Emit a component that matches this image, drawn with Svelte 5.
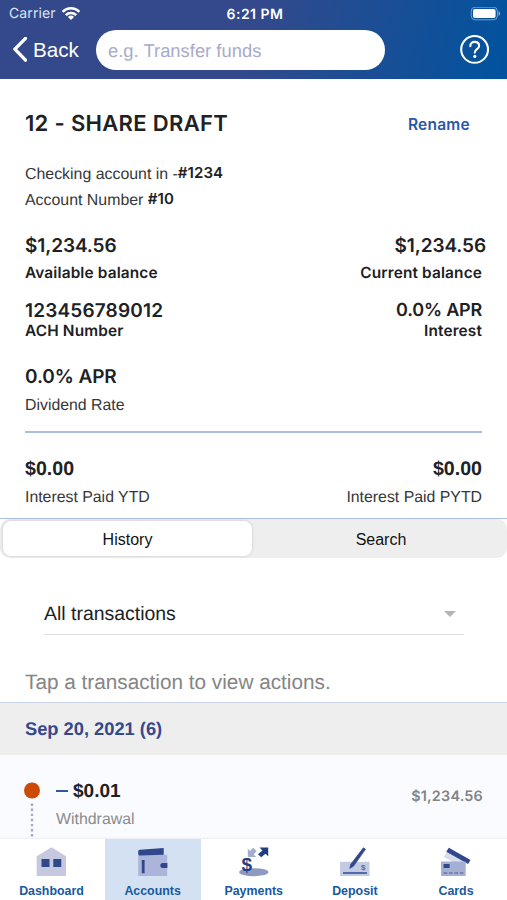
<script lang="ts">
  type Stat = { value: string; label: string };

  const available: Stat = { value: "$1,234.56", label: "Available balance" };
  const current: Stat = { value: "$1,234.56", label: "Current balance" };
  const ach: Stat = { value: "123456789012", label: "ACH Number" };
  const interest: Stat = { value: "0.0% APR", label: "Interest" };
  const dividend: Stat = { value: "0.0% APR", label: "Dividend Rate" };
  const ytd: Stat = { value: "$0.00", label: "Interest Paid YTD" };
  const pytd: Stat = { value: "$0.00", label: "Interest Paid PYTD" };

  const tabs = ["Dashboard", "Accounts", "Payments", "Deposit", "Cards"];

  let activeTab = $state("Accounts");
  let view = $state("History");
</script>

{#snippet stat(item: Stat, kind: string)}
  <div class="stat {kind}">
    <div class="value">{item.value}</div>
    <div class="label">{item.label}</div>
  </div>
{/snippet}

<div class="screen">
  <header>
    <div class="status">
      <div class="carrier">
        <span>Carrier</span>
        <svg width="20" height="14" viewBox="0 0 20 14" fill="none" stroke="#fff" stroke-width="2.5">
          <path d="M1.6 4.8a12 12 0 0 1 16.8 0" />
          <path d="M4.8 8.1a7.4 7.4 0 0 1 10.4 0" />
          <path d="M10 12.9 6.9 10a4.6 4.6 0 0 1 6.2 0z" fill="#fff" stroke="none" />
        </svg>
      </div>
      <div class="clock">6:21 PM</div>
      <div class="battery">
        <svg width="31" height="14" viewBox="0 0 31 14">
          <rect x="1.2" y="0.2" width="26.2" height="12.6" rx="4" fill="none" stroke="#fff" stroke-opacity=".45" />
          <rect x="3" y="2" width="22.6" height="9" rx="2" fill="#fff" />
          <path d="M28.6 4.1c2 .8 2 4 0 4.8z" fill="#fff" fill-opacity=".55" />
        </svg>
      </div>
    </div>
    <div class="toolbar">
      <button class="back" type="button">
        <svg width="15" height="26" viewBox="0 0 15 26" fill="none" stroke="#fff" stroke-width="3.4" stroke-linecap="round" stroke-linejoin="round">
          <path d="M13.5 1.4 2.9 12.1l10.6 11" />
        </svg>
        <span>Back</span>
      </button>
      <div class="search">e.g. Transfer funds</div>
      <button class="help" type="button" aria-label="Help">
        <svg width="30" height="30" viewBox="0 0 30 30" fill="none" stroke="#fff" stroke-width="2.1">
          <circle cx="14.6" cy="14.4" r="13.4" />
          <path d="M10.3 11.2c0-2.7 1.8-4.3 4.4-4.3s4.4 1.6 4.4 4c0 3.4-4.3 3.2-4.3 6.7" stroke-linecap="round" />
          <circle cx="14.8" cy="21.4" r="1.6" fill="#fff" stroke="none" />
        </svg>
      </button>
    </div>
  </header>

  <section class="details">
    <div class="title-row">
      <h1>12 - SHARE DRAFT</h1>
      <button class="rename" type="button">Rename</button>
    </div>
    <p><span>Checking account in -</span><b>#1234</b></p>
    <p><span>Account Number&nbsp;</span><b>#10</b></p>
    <div class="pair balances">
      {@render stat(available, "left")}
      {@render stat(current, "right wide")}
    </div>
    <div class="pair rates">
      {@render stat(ach, "left ach")}
      {@render stat(interest, "right small")}
    </div>
    <div class="pair dividend">
      {@render stat(dividend, "left plain")}
    </div>
    <div class="pair paid">
      {@render stat(ytd, "left plain money")}
      {@render stat(pytd, "right plain money")}
    </div>
  </section>

  <div class="segments">
    {#each ["History", "Search"] as name}
      <button type="button" class:selected={view === name} onclick={() => (view = name)}>{name}</button>
    {/each}
  </div>

  <div class="filter">
    <span>All transactions</span>
    <svg width="12" height="6" viewBox="0 0 12 6"><path d="M0 0h12L6 6z" fill="#b5b5b5" /></svg>
  </div>
  <div class="hint">Tap a transaction to view actions.</div>
  <div class="date">Sep 20, 2021 (6)</div>

  <div class="transaction">
    <svg class="timeline" width="16" height="57" viewBox="0 0 16 57">
      <circle cx="8" cy="8.5" r="8" fill="#cb4b05" />
      <path d="M8 21.5V57" stroke="#a3a8dc" stroke-width="2.4" stroke-dasharray="2.4 2.7" />
    </svg>
    <div class="entry">
      <div class="amount"><i></i><span>$0.01</span></div>
      <div class="kind">Withdrawal</div>
    </div>
    <div class="running">$1,234.56</div>
  </div>

  <nav>
    {#each tabs as tab}
      <button type="button" class:active={activeTab === tab} onclick={() => (activeTab = tab)}>
        <svg width="32" height="32" viewBox="0 0 32 32">
          {#if tab === "Dashboard"}
            <path d="M.7 10.2 15.5 1.2l14.5 9V30H.7z" fill="#c5c8df" />
            <path d="M5.5 13h8v8h-8zM17.3 13h8v8h-8z" fill="#31478c" />
          {:else if tab === "Accounts"}
            <path d="M1.2 8.8h29V30h-29z" fill="#aab5d9" />
            <path d="M1.2 5.2q0-1.4 1.6-1.5L26.7 2v6.8L2.9 9.4Q1.2 9.3 1.2 8z" fill="#31478c" />
            <path d="M4.8 14h2.8v13.3H4.8zM25.8 17h4.6v5h-4.6a2.5 2.5 0 0 1 0-5z" fill="#31478c" />
          {:else if tab === "Payments"}
            <ellipse cx="15.8" cy="26.2" rx="14.6" ry="4" fill="#8e9ac2" />
            <path d="M9.8 2.5V11h8.4l-2.6-2.6 3-3.3-3.6-3.3-2.8 3.2z" fill="#a5adce" />
            <path d="M30.2 1.5v8.8l-2.7-2.6-4.3 3.6L20 8.2l4.4-3.8-2.9-2.9z" fill="#213f80" />
            <text x="8.8" y="25.4" text-anchor="middle" class="dollar">$</text>
          {:else if tab === "Deposit"}
            <path d="M1 15.8h29.5V30H1z" fill="#c3cbe3" />
            <path d="M4 26h24v2H4z" fill="#536aaa" />
            <path d="m24.4 1.8 2 1.5-12 17-3.6 2 1-4z" fill="#31478c" stroke="#31478c" stroke-width=".8" />
            <text x="24.2" y="23.6" text-anchor="middle" class="check">$</text>
          {:else}
            <path d="m7.2 3.5 20 11.5-4 7L4 11z" fill="#d8dcec" />
            <path d="m8.8 1.8 21.7 12.3-2.4 4L6.4 5.8z" fill="#31478c" />
            <path d="M1 15.5h24.7V30H1z" fill="#a5afd2" />
            <path d="M3.6 18h6v4h-6z" fill="#31478c" />
            <path d="M3.6 27h20" stroke="#6678ae" stroke-width="1.7" stroke-dasharray="3.6 1.8" />
          {/if}
        </svg>
        <span>{tab}</span>
      </button>
    {/each}
  </nav>
</div>

<style>
  :global(body) {
    background: #fff;
  }

  .screen {
    width: 507px;
    height: 900px;
    overflow: hidden;
    display: flex;
    flex-direction: column;
    font-family: "Liberation Sans", Arial, sans-serif;
    color: #202124;
    text-rendering: geometricPrecision;
  }

  .screen * {
    box-sizing: border-box;
  }

  button {
    border: 0;
    padding: 0;
    background: none;
    font: inherit;
    letter-spacing: inherit;
    color: inherit;
  }

  svg {
    display: block;
    flex: none;
  }

  header {
    height: 79px;
    flex: none;
    color: #fff;
    background: linear-gradient(105deg, #34498b 0%, #34498b 48%, #00539f 100%);
  }

  .status {
    height: 27px;
    padding: 0 6px 0 9px;
    display: grid;
    grid-template-columns: 1fr auto 1fr;
    align-items: center;
    font-size: 14px;
    font-family: Inter, sans-serif;
  }

  .carrier {
    display: flex;
    align-items: center;
    gap: 5px;
    color: #dfe4f4;
    letter-spacing: 0.1px;
  }

  .clock {
    padding-top: 1px;
    font-weight: 600;
    letter-spacing: 0.5px;
  }

  .battery {
    justify-self: end;
  }

  .toolbar {
    height: 46px;
    padding: 0 17px 0 12px;
    display: flex;
    align-items: center;
  }

  .back {
    width: 84px;
    display: flex;
    align-items: center;
    gap: 6px;
    font-size: 20.6px;
  }

  .search {
    width: 289px;
    height: 40px;
    padding-left: 12px;
    border-radius: 20px;
    background: #fff;
    color: #a9abc9;
    font-size: 18.4px;
    line-height: 41px;
  }

  .help {
    margin-left: auto;
  }

  .details {
    height: 440px;
    flex: none;
    padding: 25px 25px 0;
    border-bottom: 1px solid #a9bfdd;
  }

  .title-row {
    height: 40px;
    margin-bottom: 17px;
    display: flex;
    justify-content: space-between;
    align-items: center;
  }

  h1 {
    margin: 0;
    font: 600 22px/38px Inter, sans-serif;
    letter-spacing: 0.32px;
  }

  .rename {
    margin-right: 12px;
    padding-top: 1px;
    font: 600 15.5px Inter, sans-serif;
    letter-spacing: 0.25px;
    color: #2c56a7;
  }

  p {
    margin: 0;
    height: 26px;
    line-height: 28px;
    font-size: 15.9px;
    color: #36373a;
    display: flex;
  }

  p b {
    font: 600 15px/24px Inter, sans-serif;
    letter-spacing: 0.1px;
    color: #202124;
  }

  .pair {
    display: flex;
    justify-content: space-between;
  }

  .balances {
    height: 65px;
    padding-top: 20px;
  }

  .rates {
    height: 66px;
    padding-top: 20px;
  }

  .dividend {
    height: 89px;
    padding-top: 20px;
    border-bottom: 2px solid #a9c0dc;
  }

  .paid {
    padding-top: 23px;
  }

  .right {
    text-align: right;
  }

  .value {
    height: 26px;
    font: 600 19px/25px Inter, sans-serif;
    letter-spacing: -0.1px;
  }

  .label {
    height: 27px;
    font: 600 15.4px/27px Inter, sans-serif;
    letter-spacing: 0.14px;
  }

  .wide .value {
    margin-right: -4px;
  }

  .ach .value {
    letter-spacing: 0.17px;
  }

  .small .value {
    font-size: 18px;
    letter-spacing: -0.2px;
  }

  .rates .label {
    line-height: 14px;
  }

  .plain .label {
    font: 15.85px/31px "Liberation Sans", Arial, sans-serif;
    letter-spacing: 0;
    color: #36373a;
  }

  .money .value {
    font: bold 19.6px/26px "Liberation Sans", Arial, sans-serif;
    letter-spacing: 0;
  }

  .segments {
    height: 39px;
    flex: none;
    padding: 2px 1px 2px 3px;
    display: grid;
    grid-template-columns: 249px 1fr;
    gap: 4px;
    border-radius: 10px;
    background: #eee;
    font-size: 16px;
    color: #111;
  }

  .segments button {
    border-radius: 8px;
    padding-top: 3px;
  }

  .segments .selected {
    background: #fff;
    box-shadow: 0 0 3px rgba(0, 0, 0, 0.18);
  }

  .filter {
    height: 42px;
    flex: none;
    margin: 35px 43px 0 44px;
    padding-right: 8px;
    display: flex;
    justify-content: space-between;
    align-items: center;
    border-bottom: 1px solid #dcdfe8;
    font-size: 19.45px;
  }

  .filter span {
    padding-top: 2px;
  }

  .hint {
    height: 67px;
    flex: none;
    padding-left: 25px;
    line-height: 95px;
    font-size: 20.75px;
    color: #858585;
  }

  .date {
    height: 53px;
    flex: none;
    padding-left: 25px;
    border-top: 1px solid #ccd4ea;
    background: #eee;
    font-size: 18.3px;
    font-weight: bold;
    line-height: 52px;
    color: #35488c;
  }

  .transaction {
    height: 84px;
    flex: none;
    padding: 27px 24px 0;
    display: flex;
    background: #f9fbfe;
  }

  .entry {
    margin-left: 16px;
  }

  .amount {
    height: 18px;
    display: flex;
    align-items: center;
    gap: 5px;
    font-size: 19px;
    font-weight: bold;
    line-height: 18px;
  }

  .amount span {
    padding-top: 2px;
  }

  .amount i {
    width: 12px;
    height: 2px;
    background: #375694;
  }

  .kind {
    margin-top: 11px;
    font-size: 15.9px;
    line-height: 18px;
    color: #8b8b8d;
  }

  .running {
    margin-left: auto;
    font: 600 14.4px/30px Inter, sans-serif;
    letter-spacing: 0.2px;
    color: #828386;
  }

  nav {
    height: 61px;
    flex: none;
    padding: 0 3px 0 3.5px;
    display: grid;
    grid-template-columns: repeat(5, 96px);
    justify-content: space-between;
    background: #fff;
    box-shadow: 0 -1px 2px rgba(0, 0, 0, 0.06);
    z-index: 1;
  }

  nav button {
    display: flex;
    flex-direction: column;
    align-items: center;
    padding-top: 7px;
    font: bold 12.4px/16px "Liberation Sans", Arial, sans-serif;
    color: #17599f;
  }

  nav button span {
    margin-top: 5px;
  }

  nav .active {
    background: #d4e1f2;
  }

  .dollar {
    font: bold 19px "Liberation Sans", sans-serif;
    fill: #213f80;
  }

  .check {
    font: bold 8px "Liberation Sans", sans-serif;
    fill: #536aaa;
  }
</style>
